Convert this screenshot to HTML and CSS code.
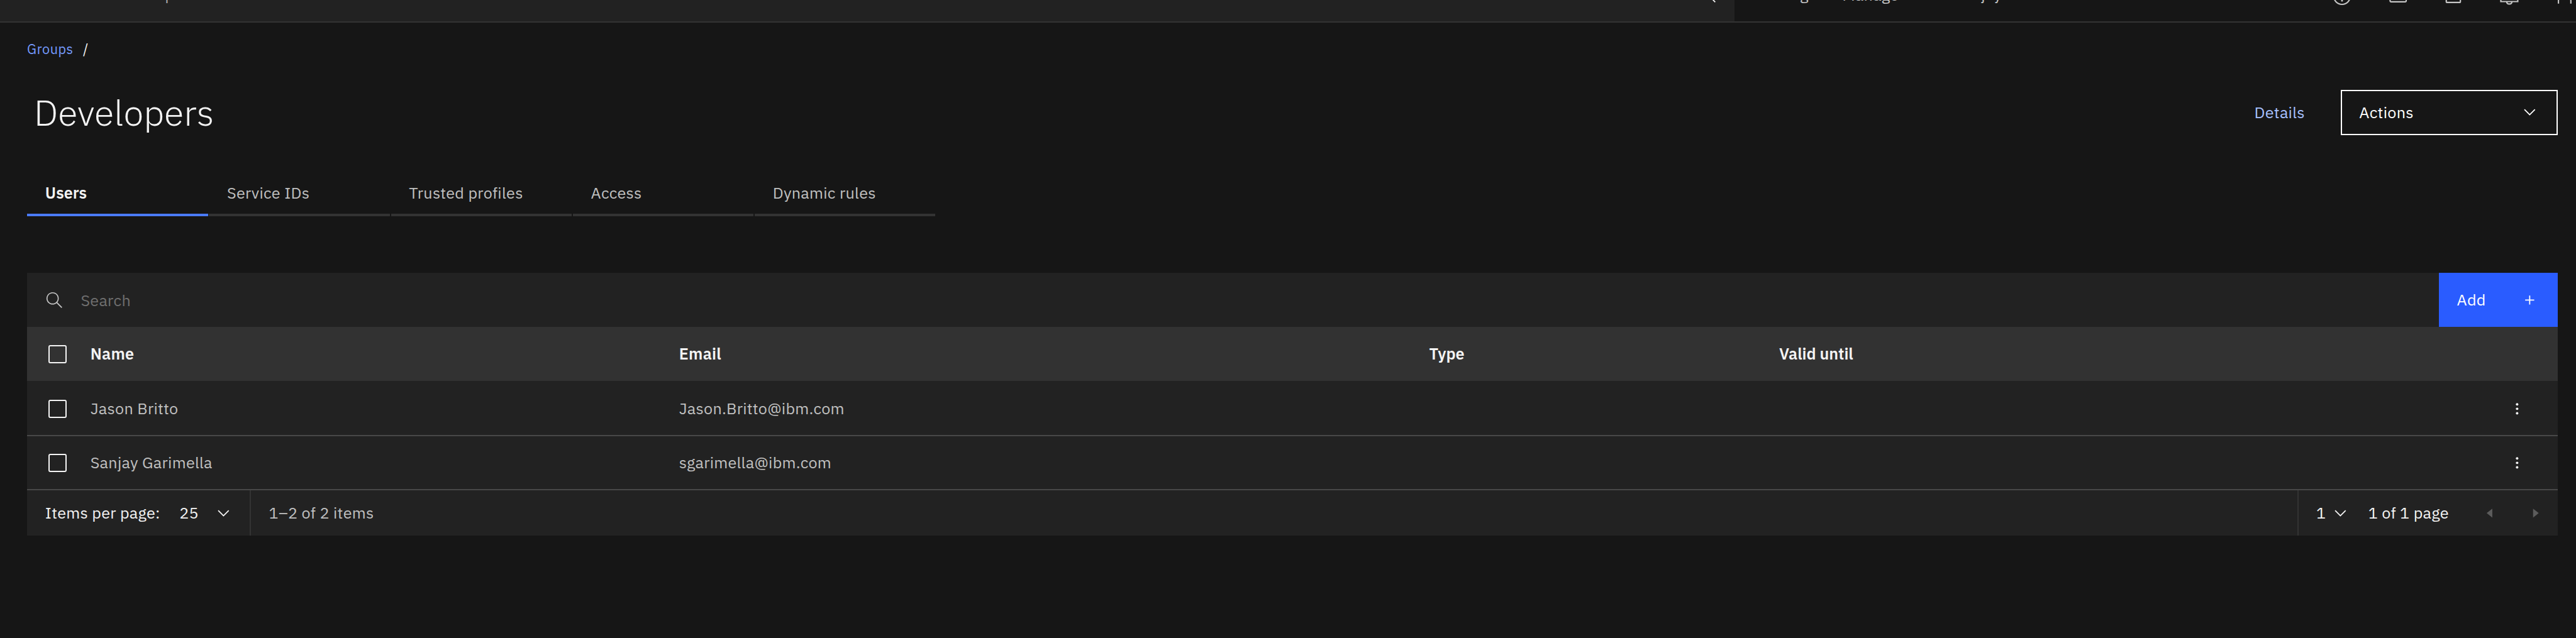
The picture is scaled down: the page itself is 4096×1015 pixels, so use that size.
FILE: index.html
```
<!DOCTYPE html>
<html lang="en">
<head>
<meta charset="utf-8">
<title>Developers</title>
<link rel="stylesheet" href="styles.css">
</head>
<body>
<header class="header">
  <div class="header-search">
    <span class="header-placeholder">Search resources and products...</span>
    <svg class="icon" viewBox="0 0 16 16"><path d="M15 14.300L10.700 10c1.900-2.300 1.600-5.800-.7-7.700S4.200.7 2.300 3 .7 8.800 3 10.700c2 1.700 5 1.700 7 0l4.300 4.300zM2 6.500C2 4 4 2 6.500 2S11 4 11 6.500 9 11 6.500 11 2 9 2 6.500z"/></svg>
  </div>
  <nav class="header-nav">
    <span class="nav-catalog">Catalog</span>
    <span class="nav-manage">Manage</span>
    <span class="nav-account">Sanjay Garimella's Account</span>
  </nav>
  <div class="header-icons">
    <svg class="header-icon" viewBox="0 0 40 40"><circle cx="20" cy="20" r="14.500"/><path d="M16 17c0-6 8-6 8-1 0 3-4 3-4 7"/><circle class="solid" cx="20" cy="28" r="1.600"/></svg>
    <svg class="header-icon" viewBox="0 0 40 40"><rect x="6" y="8" width="28.500" height="22" rx="1.500"/><path d="M11 14l5 4-5 4"/></svg>
    <svg class="header-icon" viewBox="0 0 40 40"><rect x="7.500" y="7" width="25" height="24" rx="1"/></svg>
    <svg class="header-icon" viewBox="0 0 40 40"><path d="M5 29.500v-4l4-4v-5a11 11 0 0 1 22 0v5l4 4v4zM15.500 30c0 5 9 5 9 0"/></svg>
    <svg class="header-icon" viewBox="0 0 40 40"><circle cx="20" cy="10" r="7"/><path d="M9 33v-5a6 6 0 0 1 6-6h10a6 6 0 0 1 6 6v5"/></svg>
  </div>
</header>

<main class="page">
  <nav class="breadcrumb"><a class="crumb">Groups</a><span>/</span></nav>

  <div class="title-row">
    <h1 class="title">Developers</h1>
    <a class="details">Details</a>
    <button class="actions"><span>Actions</span><svg class="icon" viewBox="0 0 16 16"><path d="M8 11L3 6l.7-.7L8 9.600l4.300-4.300.7.7z"/></svg></button>
  </div>

  <div class="tabs">
    <div class="tab tab-active">Users</div>
    <div class="tab">Service IDs</div>
    <div class="tab">Trusted profiles</div>
    <div class="tab">Access</div>
    <div class="tab">Dynamic rules</div>
  </div>

  <section class="table">
    <div class="toolbar">
      <div class="search">
        <svg class="icon" viewBox="0 0 16 16"><path d="M15 14.300L10.700 10c1.900-2.300 1.600-5.800-.7-7.700S4.200.7 2.300 3 .7 8.800 3 10.700c2 1.700 5 1.700 7 0l4.300 4.300zM2 6.500C2 4 4 2 6.500 2S11 4 11 6.500 9 11 6.500 11 2 9 2 6.500z"/></svg>
        <span class="search-text">Search</span>
      </div>
      <button class="add"><span>Add</span><svg class="icon" viewBox="0 0 16 16"><path d="M8.500 7.500V4h-1v3.500H4v1h3.500V12h1V8.500H12v-1z"/></svg></button>
    </div>

    <div class="row row-head">
      <span class="checkbox"></span><span>Name</span><span>Email</span><span class="tight">Type</span><span class="tight">Valid until</span>
    </div>
    <div class="row row-first">
      <span class="checkbox"></span><span>Jason Britto</span><span>Jason.Britto@ibm.com</span><span></span><span></span>
      <svg class="icon" viewBox="0 0 16 16"><circle cx="8" cy="4" r="1.100"/><circle cx="8" cy="8" r="1.100"/><circle cx="8" cy="12" r="1.100"/></svg>
    </div>
    <div class="row">
      <span class="checkbox"></span><span>Sanjay Garimella</span><span>sgarimella@ibm.com</span><span></span><span></span>
      <svg class="icon" viewBox="0 0 16 16"><circle cx="8" cy="4" r="1.100"/><circle cx="8" cy="8" r="1.100"/><circle cx="8" cy="12" r="1.100"/></svg>
    </div>

    <div class="pagination">
      <div class="page-size">
        <span>Items per page:</span>
        <span class="select"><span>25</span><svg class="icon" viewBox="0 0 16 16"><path d="M8 11L3 6l.7-.7L8 9.600l4.300-4.300.7.7z"/></svg></span>
      </div>
      <div class="range">1–2 of 2 items</div>
      <div class="page-nav">
        <span class="page-number">1</span>
        <svg class="icon" viewBox="0 0 16 16"><path d="M8 11L3 6l.7-.7L8 9.600l4.300-4.300.7.7z"/></svg>
        <span class="page-count">1 of 1 page</span>
        <span class="pager"><svg class="icon" viewBox="0 0 16 16"><path d="M10 4v8L5 8z"/></svg></span>
        <span class="pager"><svg class="icon" viewBox="0 0 16 16"><path d="M6 4v8l5-4z"/></svg></span>
      </div>
    </div>
  </section>
</main>
</body>
</html>
```
FILE: styles.css
```
/* 1rem is ten design pixels of a 4560px wide canvas */
html {
  font-size: calc(100vw / 456);
}

* {
  box-sizing: border-box;
}

body {
  margin: 0;
  height: 100vh;
  overflow: hidden;
  background: #161616;
  color: #f4f4f4;
  font-family: "IBM Plex Sans", Roboto, sans-serif;
  font-size: 2.8rem;
  line-height: 3.6rem;
  letter-spacing: 0.032rem;
}

button {
  margin: 0;
  font: inherit;
  letter-spacing: inherit;
  color: #fff;
}

.icon {
  display: block;
  flex: none;
  width: 3.2rem;
  height: 3.2rem;
  fill: currentColor;
}

/* Header: scrolled so that only its lower part shows */
.header {
  display: flex;
  align-items: flex-end;
  height: 4rem;
  overflow: hidden;
  border-bottom: 2px solid #333;
  color: #c6c6c6;
  white-space: nowrap;
}

.header-search {
  display: flex;
  justify-content: space-between;
  align-items: center;
  width: 307rem;
  height: 9.4rem;
  padding: 0 3.1rem 0 0.8rem;
  background: #222;
}

.header-search .icon {
  color: #f4f4f4;
}

.header-placeholder {
  margin-bottom: 0.2rem;
  color: #a8a8a8;
}

.header-nav {
  display: flex;
  align-items: center;
  width: 103.2rem;
  height: 9.4rem;
  padding: 0 0 0.2rem 3.4rem;
}

.nav-catalog {
  width: 15.7rem;
}

.nav-manage {
  width: 19.8rem;
  margin-top: 0.2rem;
}

.header-icons {
  display: flex;
  flex: none;
  gap: 5.85rem;
  width: 45.8rem;
  height: 9.4rem;
  padding: 2.95rem 0 0 2.4rem;
}

.header-icon {
  flex: none;
  width: 4rem;
  height: 4rem;
  fill: none;
  stroke: #c6c6c6;
  stroke-width: 2.4;
}

.header-icon .solid {
  fill: #c6c6c6;
  stroke: none;
}

.page {
  padding: 3.1rem 3.2rem 0 4.8rem;
}

.breadcrumb {
  display: flex;
  gap: 1.7rem;
  height: 3.2rem;
  font-size: 2.4rem;
  line-height: 3.2rem;
  letter-spacing: 0.064rem;
}

.crumb {
  color: #759bff;
}

.title-row {
  display: flex;
  align-items: center;
  height: 8rem;
  margin-top: 5.6rem;
}

.title {
  flex: 1;
  margin: 0;
  padding-left: 1.2rem;
  font-size: 6.4rem;
  font-weight: 300;
  line-height: 8rem;
  letter-spacing: 0;
}

.details {
  margin-right: 6.4rem;
  color: #a6c0ff;
}

.actions {
  display: flex;
  justify-content: space-between;
  align-items: center;
  width: 38.4rem;
  height: 8rem;
  padding: 0 3.2rem 0 3rem;
  border: 2px solid #fff;
  background: transparent;
}

.tabs {
  display: flex;
  gap: 0.2rem;
  margin-top: 6.4rem;
}

.tab {
  width: 32rem;
  height: 8rem;
  padding: 2.15rem 0 0 3.2rem;
  border-bottom: 4px solid #333;
  color: #c0c0c0;
}

.tab-active {
  border-color: #4a7bff;
  color: #f4f4f4;
  font-weight: 600;
  letter-spacing: 0;
}

.table {
  margin-top: 10rem;
  background: #222;
}

.toolbar {
  display: flex;
  height: 9.6rem;
}

.search {
  display: flex;
  flex: 1;
  align-items: center;
  gap: 3.1rem;
  padding-left: 3.2rem;
  color: #6f6f6f;
}

.search-text {
  padding-top: 0.2rem;
}

.search .icon {
  color: #c6c6c6;
}

.add {
  display: flex;
  justify-content: space-between;
  align-items: center;
  width: 21.1rem;
  padding: 0 3.4rem 0 3.2rem;
  border: 0;
  background: #2a5cff;
}

.row {
  display: grid;
  grid-template-columns: 7.4rem 104.2rem 132.8rem 61.95rem 1fr 3.2rem;
  align-items: center;
  height: 9.6rem;
  padding: 0 5.6rem 0 3.8rem;
  border-bottom: 2px solid #484848;
  color: #c0c0c0;
}

.row .icon {
  color: #f4f4f4;
}

.row-first {
  height: 9.8rem;
  padding-top: 2px;
}

.row-head {
  border: 0;
  background: #323232;
  color: #f4f4f4;
  font-weight: 600;
}

.tight {
  letter-spacing: 0;
}

.checkbox {
  width: 3.2rem;
  height: 3.2rem;
  border: 2px solid #f4f4f4;
  border-radius: 3px;
}

.pagination {
  display: flex;
  height: 8rem;
}

.page-size,
.select,
.page-nav {
  display: flex;
  align-items: center;
}

.page-size {
  justify-content: space-between;
  width: 39.6rem;
  padding: 0 3rem 0 3.2rem;
  border-right: 2px solid #333;
}

.select {
  gap: 2.8rem;
}

.range {
  flex: 1;
  padding-left: 3.2rem;
  line-height: 8rem;
  color: #c0c0c0;
}

.page-nav {
  width: 46.1rem;
  padding-left: 3.1rem;
  border-left: 2px solid #333;
}

.page-number {
  width: 2.7rem;
}

.page-count {
  flex: 1;
  margin-left: 3.3rem;
}

.pager {
  display: flex;
  justify-content: center;
  width: 8rem;
  color: #5c5c5c;
}
```
